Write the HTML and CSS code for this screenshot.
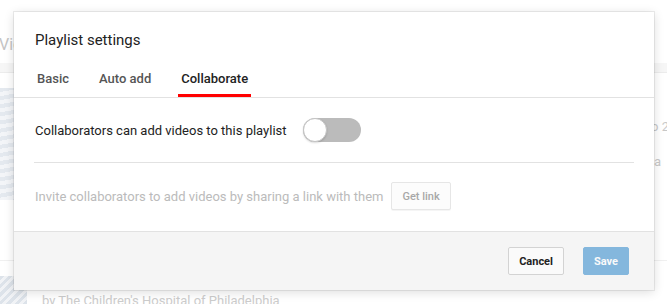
FILE: index.html
```html
<!DOCTYPE html>
<html lang="en">
<head>
  <meta charset="UTF-8">
  <title>Playlist settings</title>
  <link rel="stylesheet" href="styles.css">
</head>
<body>
  <div class="Page">
    <div class="Page-Head">
      <div class="Page-Title">Videos</div>
    </div>
    <div class="Page-Strip"></div>

    <div class="Page-Item">
      <div class="Page-Thumb Page-Thumb-Building"></div>
      <div class="Page-Info">
        <div class="Page-Info-Line">Playlist video 2</div>
        <div class="Page-Info-Line">Children's Hospital of Philadelphia</div>
      </div>
    </div>

    <div class="Page-Item Page-Item-Last">
      <div class="Page-Thumb Page-Thumb-Small"></div>
      <div class="Page-Byline">by The Children's Hospital of Philadelphia</div>
    </div>
  </div>

  <div class="Dialog">
    <div class="Dialog-Head">
      <div class="Dialog-Title">Playlist settings</div>
      <div class="Dialog-Tabs">
        <div class="Dialog-Tab">Basic</div>
        <div class="Dialog-Tab">Auto add</div>
        <div class="Dialog-Tab Dialog-Tab-Active">Collaborate</div>
      </div>
    </div>

    <div class="Dialog-Body">
      <div class="Dialog-Row">
        <span class="Dialog-Label">Collaborators can add videos to this playlist</span>
        <div class="Toggle">
          <div class="Toggle-Knob"></div>
        </div>
      </div>

      <div class="Dialog-Divider"></div>

      <div class="Dialog-Row Dialog-Row-Invite">
        <span class="Dialog-Hint">Invite collaborators to add videos by sharing a link with them</span>
        <button class="Button Button-Link">Get link</button>
      </div>
    </div>

    <div class="Dialog-Foot">
      <button class="Button Button-Cancel">Cancel</button>
      <button class="Button Button-Save">Save</button>
    </div>
  </div>
</body>
</html>
```

FILE: styles.css
```css
* {
  margin: 0;
  padding: 0;
  box-sizing: border-box;
  font-family: Roboto, 'Liberation Sans', sans-serif;
}

body {
  overflow: hidden;
  background-color: #ffffff;
  width: 667px;
  height: 304px;
  position: relative;
}

/* faded page behind the dialog */
.Page {
  color: #cfcfcf;
}

.Page-Head {
  height: 63px;
  padding-top: 35px;
}

.Page-Title {
  font-size: 16px;
  line-height: 20px;
  margin-left: -1px;
  color: #c4c4c4;
}

.Page-Strip {
  height: 10px;
  background-color: #f6f6f6;
  border-bottom: 1px solid #ececec;
}

.Page-Item {
  display: flex;
  align-items: flex-start;
  padding-top: 15px;
  height: 188px;
  border-bottom: 1px solid #f0f0f0;
}

.Page-Item-Last {
  border-bottom: none;
  height: auto;
  padding-top: 15px;
  align-items: flex-end;
}

.Page-Thumb {
  width: 120px;
  height: 112px;
  flex-shrink: 0;
}

.Page-Thumb-Building {
  background: repeating-linear-gradient(170deg, #e4e9ef 0 4px, #f3f5f8 4px 8px);
}

.Page-Thumb-Small {
  width: 27px;
  height: 28px;
  background: repeating-linear-gradient(135deg, #dde3ea 0 3px, #f1f3f6 3px 6px);
}

.Page-Info {
  flex: 1;
  text-align: right;
  padding-top: 29px;
  font-size: 13px;
  line-height: 20px;
  color: #c8c8c8;
  white-space: nowrap;
  overflow: hidden;
}

.Page-Info-Line {
  margin-bottom: 15px;
  margin-right: -2px;
}

.Page-Info-Line + .Page-Info-Line {
  margin-right: 6px;
}

.Page-Byline {
  margin-left: 15px;
  font-size: 13px;
  line-height: 14px;
  margin-bottom: -4px;
  color: #cccccc;
}

/* dialog */
.Dialog {
  position: absolute;
  left: 14px;
  top: 12px;
  width: 640px;
  height: 278px;
  background-color: #ffffff;
  box-shadow: 0 0 0 1px rgba(0, 0, 0, 0.07), 0 2px 10px rgba(0, 0, 0, 0.14);
  display: flex;
  flex-direction: column;
}

.Dialog-Head {
  padding: 18px 20px 0 20px;
  border-bottom: 1px solid #e2e2e2;
}

.Dialog-Title {
  font-size: 15px;
  line-height: 20px;
  color: #222222;
  padding-left: 1px;
}

.Dialog-Tabs {
  display: flex;
  margin-top: 9px;
}

.Dialog-Tab {
  padding: 12px 3px 7px 3px;
  margin-right: 24px;
  font-size: 13px;
  font-weight: 500;
  line-height: 16px;
  color: #555555;
  border-bottom: 3px solid transparent;
}

.Dialog-Tab-Active {
  color: #222222;
  border-bottom-color: #ff0000;
}

.Dialog-Body {
  flex: 1;
  padding: 20px 20px 0 20px;
}

.Dialog-Row {
  display: flex;
  align-items: center;
  padding-left: 1px;
}

.Dialog-Label {
  font-size: 13px;
  color: #222222;
}

.Toggle {
  margin-left: 16px;
  width: 58px;
  height: 24px;
  border-radius: 12px;
  background-color: #bbbbbb;
  display: flex;
  align-items: center;
}

.Toggle-Knob {
  width: 24px;
  height: 24px;
  border-radius: 50%;
  background-color: #ffffff;
  border: 1px solid #c4c4c4;
  box-shadow: 0 1px 2px rgba(0, 0, 0, 0.15);
}

.Dialog-Divider {
  height: 1px;
  background-color: #e2e2e2;
  margin: 20px 0 19px 0;
}

.Dialog-Hint {
  font-size: 13px;
  color: #bbbbbb;
}

.Button {
  height: 28px;
  padding: 0 10px;
  font-size: 11px;
  font-weight: 700;
  border-radius: 2px;
  border: 1px solid #d3d3d3;
  background-color: #f8f8f8;
  color: #333333;
  cursor: pointer;
  outline: none;
}

.Button-Link {
  margin-left: 8px;
  font-weight: 500;
  color: #a8a8a8;
  background-color: #fcfcfc;
  border-color: #e6e6e6;
  box-shadow: 0 1px 0 rgba(0, 0, 0, 0.04);
}

.Dialog-Foot {
  background-color: #f5f5f5;
  border-top: 1px solid #e2e2e2;
  padding: 15px 25px 15px 25px;
  display: flex;
  justify-content: flex-end;
  gap: 19px;
}

.Button-Cancel {
  background-color: #fafafa;
  color: #222222;
  border-color: #d3d3d3;
}

.Button-Save {
  background-color: #167ac6;
  border-color: #167ac6;
  color: #ffffff;
  opacity: 0.5;
}
```
